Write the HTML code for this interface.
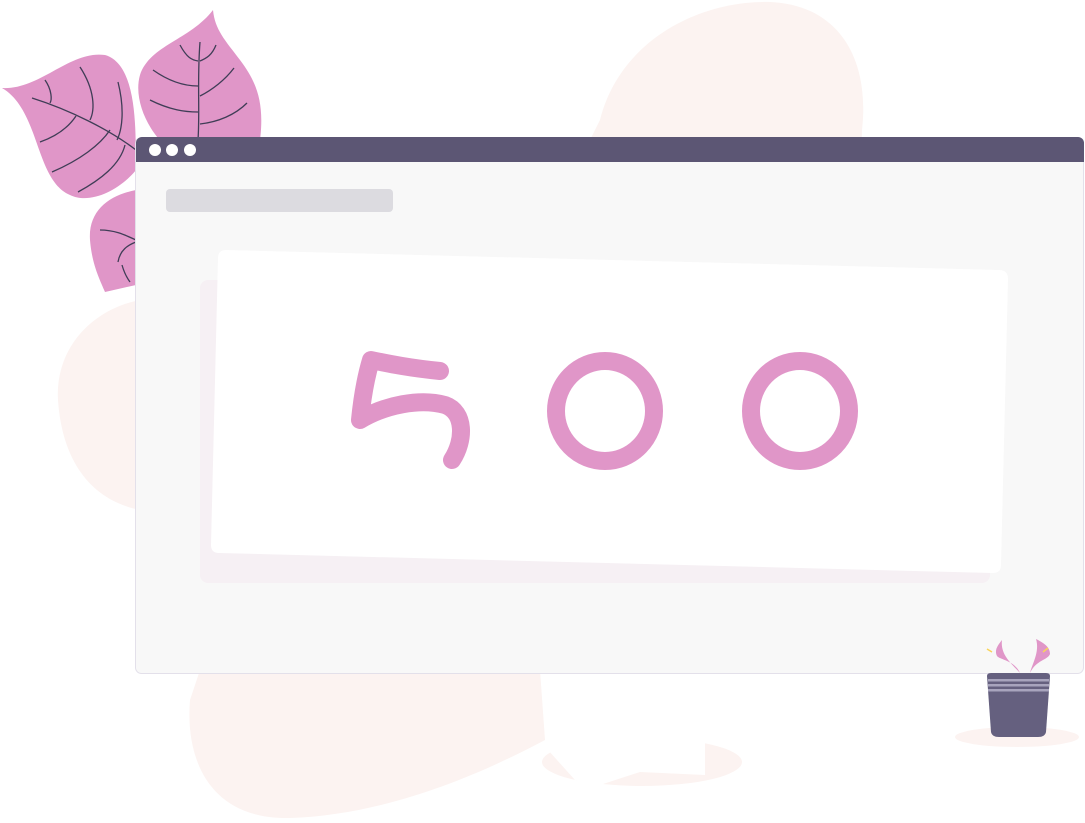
<!DOCTYPE html>
<html><head><style>html,body{margin:0;padding:0;background:#fff;width:1085px;height:823px;overflow:hidden}</style></head>
<body>
<svg width="1085" height="823" viewBox="0 0 1085 823" xmlns="http://www.w3.org/2000/svg">
<g fill="#fcf3f1">
<path d="M600,120 C620,40 700,0 770,2 C840,5 870,60 862,130 L860,200 L560,200 Z"/>
<path d="M140,300 C90,310 55,350 58,400 C62,460 90,500 140,510 Z"/>
<path d="M200,670 L540,670 L545,740 C470,780 380,815 290,818 C210,820 185,760 190,700 Z"/>
<ellipse cx="642" cy="762" rx="100" ry="24"/>
<ellipse cx="1017" cy="737" rx="62" ry="10"/>
</g>
<path d="M540,670 L700,670 L705,740 L705,775 L640,772 L600,785 L575,780 L548,750 Z" fill="#fff"/>
<g fill="#e096c8">
<path d="M2,88 C40,90 70,50 105,55 C140,65 135,140 136,170 C120,190 90,205 70,195 C35,180 40,110 2,88 Z"/>
<path d="M213,10 C190,40 150,45 140,75 C130,110 165,160 195,160 L260,140 C265,100 255,80 240,60 C225,40 215,30 213,10 Z"/>
<path d="M136,190 C110,195 88,210 90,240 C92,265 100,280 105,292 L136,285 Z"/>
</g>
<g fill="none" stroke="#3f3d56" stroke-width="1.3">
<path d="M32,98 C70,110 110,130 136,150"/>
<path d="M45,80 C52,90 52,100 50,103"/>
<path d="M80,67 C95,90 95,110 90,120"/>
<path d="M118,82 C125,110 122,130 117,140"/>
<path d="M40,142 C60,135 70,125 76,116"/>
<path d="M52,172 C80,160 100,145 110,130"/>
<path d="M78,192 C100,180 120,165 125,145"/>
<path d="M200,42 C197,80 200,110 198,140"/>
<path d="M180,45 C187,58 192,60 198,61"/>
<path d="M216,45 C212,55 207,58 200,61"/>
<path d="M153,70 C170,82 185,86 198,86"/>
<path d="M234,68 C225,80 212,90 200,96"/>
<path d="M150,100 C170,110 185,112 198,112"/>
<path d="M247,103 C235,115 218,122 200,124"/>
<path d="M100,230 C115,230 125,235 136,240"/>
<path d="M118,262 C120,250 128,245 136,242"/>
<path d="M122,265 C124,272 127,278 130,282"/>
</g>
<rect x="135.5" y="137.5" width="948" height="536" rx="6" fill="#f8f8f8" stroke="#e3e0ea"/>
<path d="M136,143 a6,6 0 0 1 6,-6 L1078,137 a6,6 0 0 1 6,6 L1084,162 L136,162 Z" fill="#5c5674"/>
<circle cx="155" cy="150" r="6" fill="#fff"/>
<circle cx="172" cy="150" r="6" fill="#fff"/>
<circle cx="190" cy="150" r="6" fill="#fff"/>
<rect x="166" y="189" width="227" height="23" rx="4" fill="#dcdbe0"/>
<rect x="200" y="280" width="790" height="303" rx="8" fill="#f6f0f4"/>
<path d="M226,250 L999,270 Q1008,270 1008,279 L1001,565 Q1001,573 993,573 L219,553 Q211,553 211,545 L218,258 Q218,250 226,250 Z" fill="#fff"/>
<g fill="none" stroke="#e096c8" stroke-width="18" stroke-linecap="round" stroke-linejoin="round">
<path d="M440,371 C410,368 390,364 371,360 C365,380 362,400 360,420 C385,405 420,398 445,405 C465,412 465,440 452,460"/>
<ellipse cx="605" cy="411" rx="49" ry="50"/>
<ellipse cx="800" cy="411" rx="49" ry="50"/>
</g>
<path d="M1020,673 C1014,660 1000,660 997,656 C994,650 998,645 1002,640 C1000,655 1012,664 1020,673 Z" fill="#e096c8"/>
<path d="M1030,673 C1036,660 1048,660 1050,654 C1050,648 1046,644 1036,639 C1040,652 1032,664 1030,673 Z" fill="#e096c8"/>
<path d="M987,649 L992,652 M1048,648 L1043,652" stroke="#f9d45a" stroke-width="1.5"/>
<path d="M987,676 Q987,673 991,673 L1046,673 Q1050,673 1050,676 L1046,732 Q1045,737 1038,737 L999,737 Q992,737 991,732 Z" fill="#65607f"/>
<g fill="#a8a4bd"><rect x="988" y="679" width="61" height="2.5"/><rect x="988" y="684" width="61" height="2.5"/><rect x="988" y="689" width="61" height="2.5"/></g>
</svg>
</body></html>
